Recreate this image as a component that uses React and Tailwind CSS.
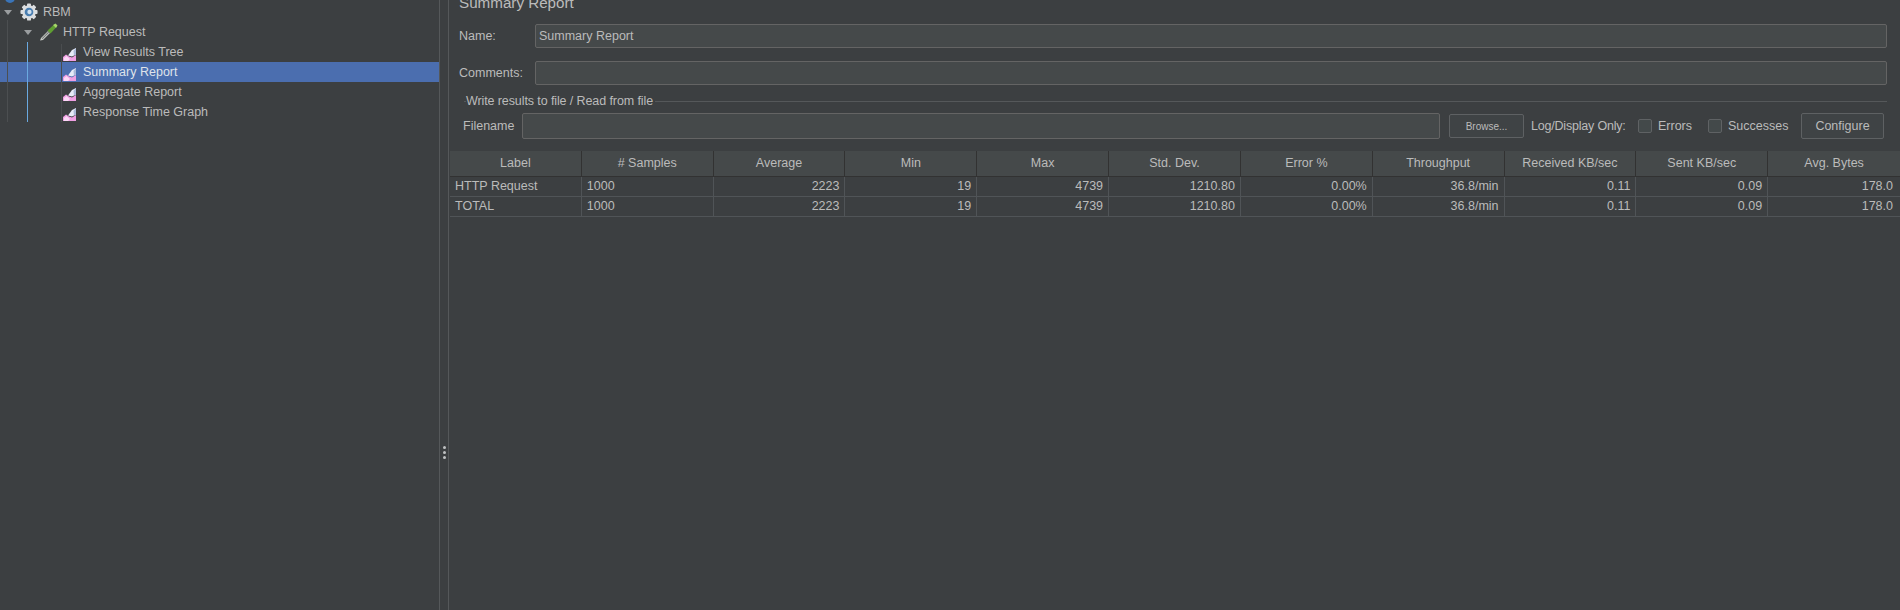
import React from "react";

const columns = [
  "Label",
  "# Samples",
  "Average",
  "Min",
  "Max",
  "Std. Dev.",
  "Error %",
  "Throughput",
  "Received KB/sec",
  "Sent KB/sec",
  "Avg. Bytes",
];

const rows = [
  ["HTTP Request", "1000", "2223", "19", "4739", "1210.80", "0.00%", "36.8/min", "0.11", "0.09", "178.0"],
  ["TOTAL", "1000", "2223", "19", "4739", "1210.80", "0.00%", "36.8/min", "0.11", "0.09", "178.0"],
];

const ReportIcon = () => (
  <svg width="13" height="14" viewBox="0 0 13 14" className="shrink-0 mr-[7px] mt-[3px]">
    <path d="M0 14 L0 10 L3 7.5 L6 9.5 L9 10.5 L13 8 L13 14 Z" fill="#ef9fe3" />
    <path d="M1 14 L1 11 L3.5 9 L7 12 L5 14 Z" fill="#fbd9f6" />
    <path d="M5 8.5 L9 3 L13 1 L13 7.5 L9 9.5 Z" fill="#e6ebf7" />
    <path d="M10.5 4 L13 1 L13 7.5 L11 8.5 Z" fill="#a9b9d8" />
  </svg>
);

const GearIcon = () => (
  <svg width="18" height="18" viewBox="0 0 20 20" className="shrink-0 mr-[5px]">
    <g fill="#dcdee0">
      <circle cx="10" cy="10" r="7.5" />
      <rect x="7.8" y="0.5" width="4.4" height="19" rx="1" />
      <rect x="7.8" y="0.5" width="4.4" height="19" rx="1" transform="rotate(45 10 10)" />
      <rect x="7.8" y="0.5" width="4.4" height="19" rx="1" transform="rotate(90 10 10)" />
      <rect x="7.8" y="0.5" width="4.4" height="19" rx="1" transform="rotate(135 10 10)" />
    </g>
    <circle cx="10" cy="10" r="4.8" fill="#4a7eb0" />
    <circle cx="10.5" cy="10" r="2.4" fill="#cfe0f0" />
  </svg>
);

const DropperIcon = () => (
  <svg width="18" height="18" viewBox="0 0 18 18" className="shrink-0 mr-[5px]">
    <path d="M0 17.5 L1 15 L8 8 L10 10 L3 17 Z" fill="#c4c7c3" />
    <path d="M1.8 15.4 L8.4 8.8 L9 9.4 L2.4 16 Z" fill="#6d7070" />
    <path d="M7.5 7.5 L13.5 2 L16 4.5 L10.5 10.5 Z" fill="#5f9e32" />
    <path d="M13 2 L15.5 0.5 L17.5 2.5 L16 5 Z" fill="#a6d86a" />
  </svg>
);

const TreeRow = ({ indent, icon, label, selected, caret }) => (
  <div className={`h-5 flex items-center ${selected ? "bg-[#4b6eaf] text-[#dfe3ea]" : ""}`}>
    <div className={`flex items-center ${indent}`}>
      {caret && (
        <span className="w-0 h-0 mr-[8px] border-l-[4px] border-r-[4px] border-t-[5px] border-l-transparent border-r-transparent border-t-[#9a9d9f]" />
      )}
      {icon}
      <span className="pt-px">{label}</span>
    </div>
  </div>
);

const Field = ({ label, value, className }) => (
  <div className={`flex items-center ${className}`}>
    <span className="w-[76px] shrink-0 pt-px">{label}</span>
    <div className="flex-1 h-[24px] bg-[#45494a] border border-[#646464] rounded-[2px] flex items-center px-[3px] pt-px">
      {value}
    </div>
  </div>
);

const Checkbox = ({ label, labelWidth, className }) => (
  <div className={`flex items-center ${className}`}>
    <span className="w-[14px] h-[14px] bg-[#43494a] border border-[#5f6264] rounded-[2px]" />
    <span className={`ml-[6px] whitespace-nowrap ${labelWidth}`}>{label}</span>
  </div>
);

export default function App() {
  return (
    <div className="w-[1900px] h-[610px] overflow-hidden flex bg-[#3c3f41] text-[#bbbbbb] text-[12.5px] font-['Liberation_Sans',Arial,sans-serif]">
      {/* Tree */}
      <div className="relative w-[440px] shrink-0 border-r border-[#55585a] pt-[2px]">
        <div className="absolute left-[7px] top-[20px] h-[102px] w-px bg-[#4c4f51] z-10" />
        <div className="absolute left-[27px] top-[42px] h-[80px] w-px bg-[#6aa9e0] z-10" />
        <div className="absolute left-[61px] top-[44px] h-[78px] w-px bg-[#4a4d4f] z-10" />
        <div className="absolute left-[5px] -top-[7px] w-[10px] h-[10px] rounded-full bg-[#3a74b8]" />
        <TreeRow indent="pl-[4px]" caret icon={<GearIcon />} label="RBM" />
        <TreeRow indent="pl-[24px]" caret icon={<DropperIcon />} label="HTTP Request" />
        <TreeRow indent="pl-[63px]" icon={<ReportIcon />} label="View Results Tree" />
        <TreeRow indent="pl-[63px]" selected icon={<ReportIcon />} label="Summary Report" />
        <TreeRow indent="pl-[63px]" icon={<ReportIcon />} label="Aggregate Report" />
        <TreeRow indent="pl-[63px]" icon={<ReportIcon />} label="Response Time Graph" />
      </div>

      {/* Splitter */}
      <div className="w-[9px] shrink-0 border-r border-[#55585a] flex flex-col items-center justify-center gap-[2px] pt-[294px]">
        <span className="w-[3px] h-[3px] rounded-full bg-[#bfc1c2]" />
        <span className="w-[3px] h-[3px] rounded-full bg-[#bfc1c2]" />
        <span className="w-[3px] h-[3px] rounded-full bg-[#bfc1c2]" />
      </div>

      {/* Summary Report panel */}
      <div className="flex-1 min-w-0 flex flex-col">
        <div className="h-[14px] -mt-[4px] pl-[10px] text-[15.2px] leading-[14px]">Summary Report</div>
        <div className="pl-[10px] pr-[13px]">
          <Field label="Name:" value="Summary Report" className="mt-[14px]" />
          <Field label="Comments:" value="" className="mt-[13px]" />
        </div>

        <div className="mt-[9px] ml-[15px] mr-[13px] h-[14px] flex items-center">
          <div className="w-[2px] h-px bg-[#55585a]" />
          <span className="pr-[2px] tracking-[-0.1px]">Write results to file / Read from file</span>
          <div className="flex-1 h-px bg-[#55585a]" />
        </div>

        <div className="mt-[5px] pl-[14px] pr-[16px] flex items-center">
          <span className="w-[59px] shrink-0">Filename</span>
          <div className="flex-1 h-[26px] bg-[#45494a] border border-[#646464] rounded-[2px]" />
          <button className="ml-[9px] w-[75px] h-[24px] border border-[#5e6163] rounded-[2px] bg-[#3f4345] text-[10px]">
            Browse...
          </button>
          <span className="ml-[7px] w-[95px] whitespace-nowrap tracking-[-0.2px]">Log/Display Only:</span>
          <Checkbox label="Errors" labelWidth="w-[33px]" className="ml-[12px]" />
          <Checkbox label="Successes" labelWidth="w-[61px]" className="ml-[17px]" />
          <button className="ml-[12px] w-[83px] h-[26px] border border-[#5e6163] rounded-[2px] bg-[#3f4345]">
            Configure
          </button>
        </div>

        {/* Table */}
        <div className="mt-[12px] pl-px">
          <div className="grid grid-cols-11 h-[26px] bg-[#45494a] border-b border-[#323232]">
            {columns.map((col) => (
              <div key={col} className="flex items-center justify-center border-r border-[#323232] last:border-r-0">
                {col}
              </div>
            ))}
          </div>
          {rows.map((row) => (
            <div key={row[0]} className="grid grid-cols-11 h-5 border-b border-[#505457]">
              {row.map((cell, i) => (
                <div
                  key={i}
                  className={`flex items-center px-[5px] border-r border-[#505457] last:border-r-0 last:pr-[7px] ${
                    i < 2 ? "justify-start" : "justify-end"
                  }`}
                >
                  {cell}
                </div>
              ))}
            </div>
          ))}
        </div>
      </div>
    </div>
  );
}
